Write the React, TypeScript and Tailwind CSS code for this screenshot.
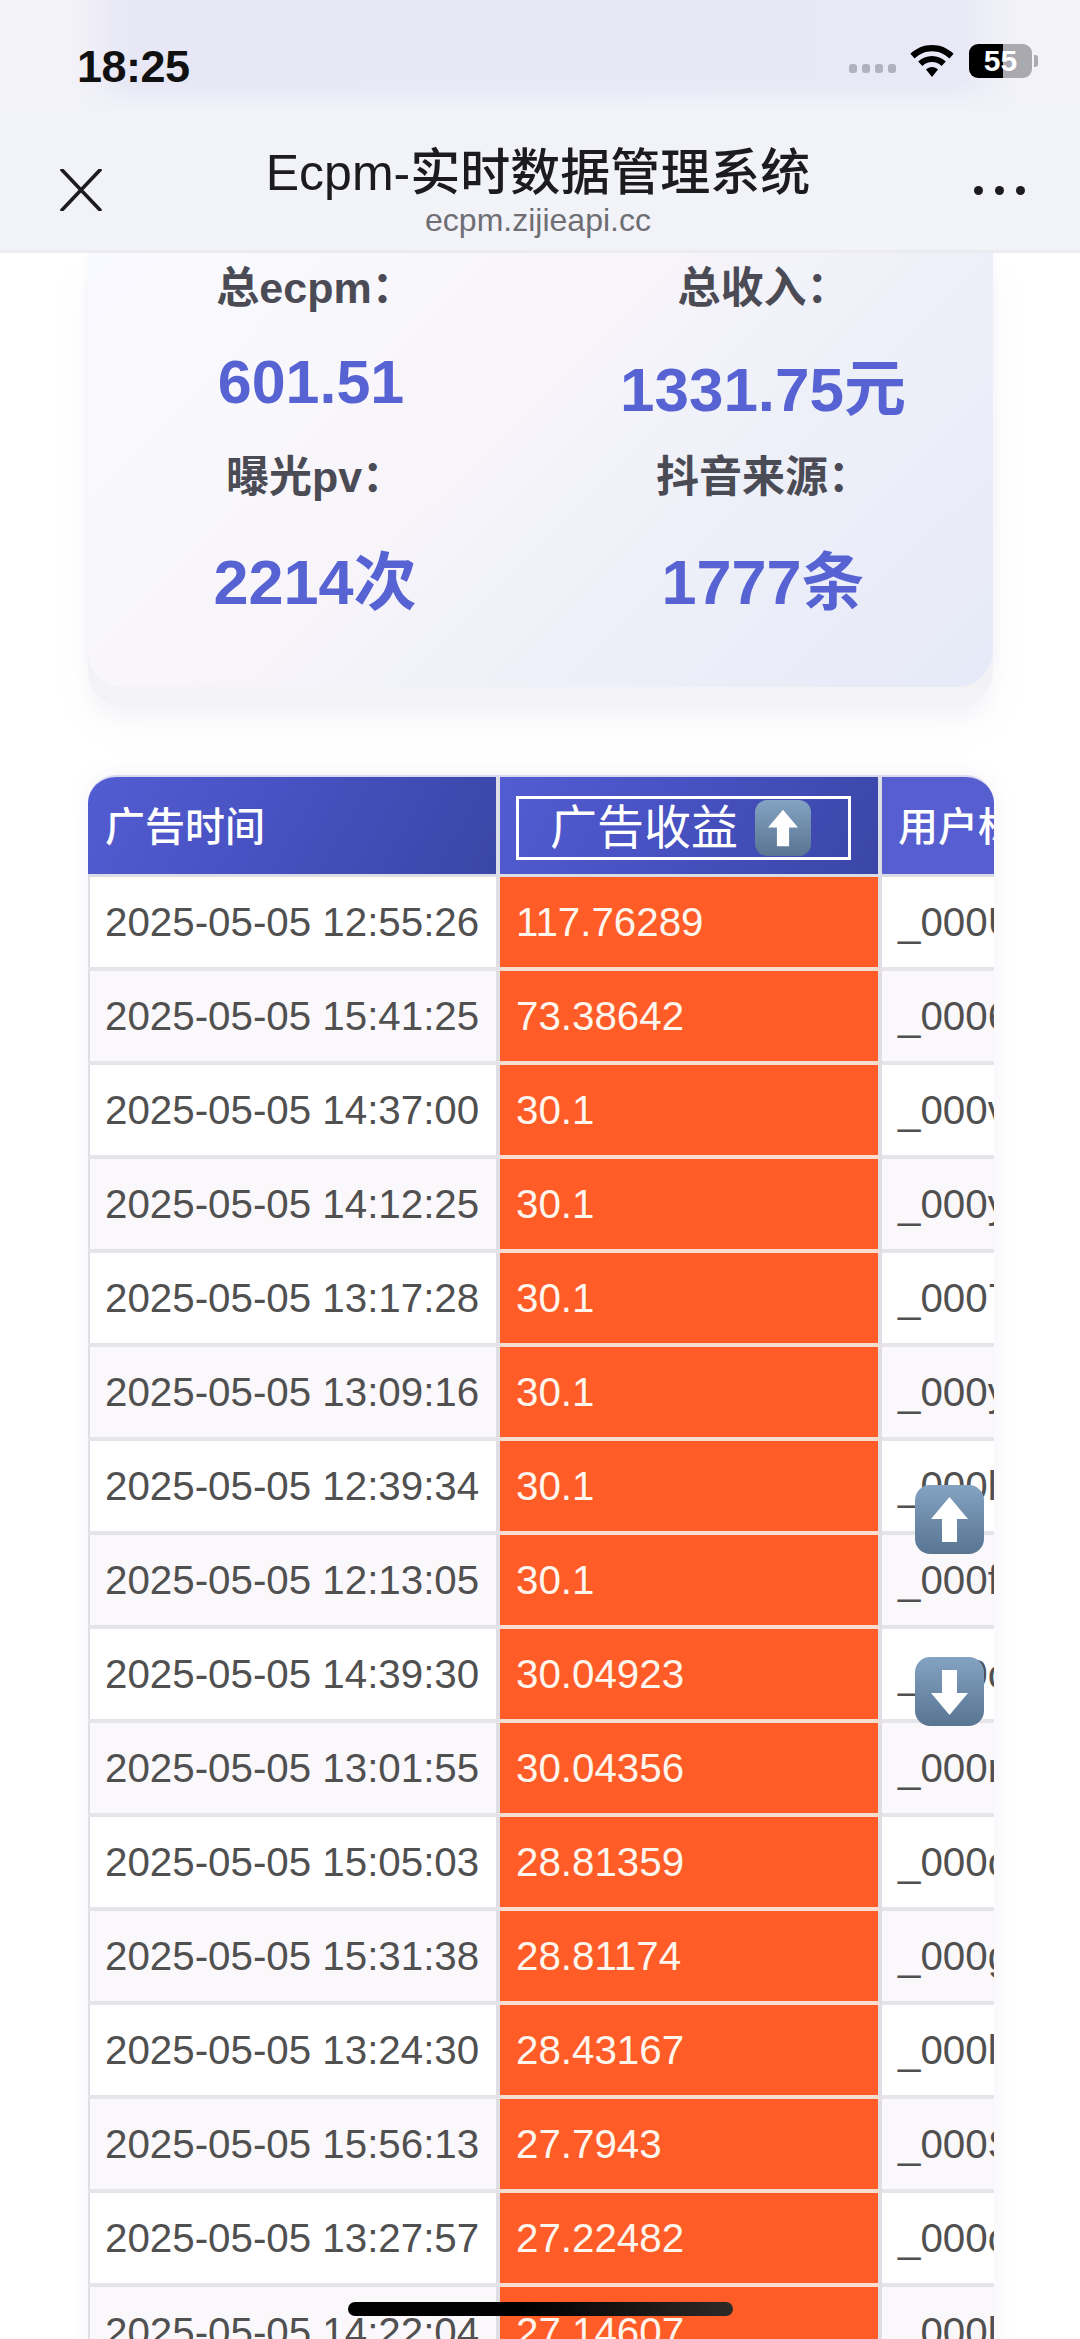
import React from 'react';

const rows = [
  ['2025-05-05 12:55:26', '117.76289', '_000U'],
  ['2025-05-05 15:41:25', '73.38642', '_0006'],
  ['2025-05-05 14:37:00', '30.1', '_000v'],
  ['2025-05-05 14:12:25', '30.1', '_000y'],
  ['2025-05-05 13:17:28', '30.1', '_0007'],
  ['2025-05-05 13:09:16', '30.1', '_000y'],
  ['2025-05-05 12:39:34', '30.1', '_000l'],
  ['2025-05-05 12:13:05', '30.1', '_000f'],
  ['2025-05-05 14:39:30', '30.04923', '_000c'],
  ['2025-05-05 13:01:55', '30.04356', '_000r'],
  ['2025-05-05 15:05:03', '28.81359', '_000c'],
  ['2025-05-05 15:31:38', '28.81174', '_000g'],
  ['2025-05-05 13:24:30', '28.43167', '_000l'],
  ['2025-05-05 15:56:13', '27.7943', '_000S'],
  ['2025-05-05 13:27:57', '27.22482', '_000c'],
  ['2025-05-05 14:22:04', '27.14607', '_000l'],
];

const ArrowKey: React.FC<{ dir: 'up' | 'down'; className: string }> = ({ dir, className }) => (
  <span className={`block rounded-[22%] bg-gradient-to-b from-[#84a3c2] to-[#587592] ${className}`}>
    <svg viewBox="0 0 69 69" className="w-full h-full" fill="#fff">
      {dir === 'up' ? (
        <polygon points="34.5,12 53,34 42,34 42,57 27,57 27,34 16,34" />
      ) : (
        <polygon points="34.5,58 53,36 42,36 42,13 27,13 27,36 16,36" />
      )}
    </svg>
  </span>
);

const StatusBar = () => (
  <div className="h-[110px] pt-[44px] pl-[77px] pr-[42px] flex items-start justify-between bg-[linear-gradient(to_bottom,transparent_75%,#f2f3f9_100%),linear-gradient(to_right,#f3f2f8_7%,#e7e7f6_12%,#e8e8f6_88%,#f2f2f8_94%)]">
    <span className="text-[45px] leading-[46px] font-bold text-[#111] tracking-[-0.5px]">18:25</span>
    <div className="flex items-center">
      <div className="flex gap-[5px] mt-[14px]">
        <i className="w-[8px] h-[9px] rounded-[3px] bg-[#b2b2be]" />
        <i className="w-[8px] h-[9px] rounded-[3px] bg-[#b2b2be]" />
        <i className="w-[8px] h-[9px] rounded-[3px] bg-[#b2b2be]" />
        <i className="w-[8px] h-[9px] rounded-[3px] bg-[#b2b2be]" />
      </div>
      <svg viewBox="0 0 44 32" className="w-[44px] h-[32px] ml-[14px]" fill="#000">
        <path d="M22 0C13.5 0 6 3.4 0.4 8.8L4.6 13.4C9.2 9 15.3 6.2 22 6.2S34.8 9 39.4 13.4L43.6 8.8C38 3.4 30.5 0 22 0Z" />
        <path d="M22 11C16.6 11 11.8 13.1 8.2 16.5L12.4 21C14.9 18.6 18.3 17.1 22 17.1S29.1 18.6 31.6 21L35.8 16.5C32.2 13.1 27.4 11 22 11Z" />
        <path d="M22 22C19.7 22 17.6 22.9 16 24.4L22 32L28 24.4C26.4 22.9 24.3 22 22 22Z" />
      </svg>
      <div className="relative ml-[15px] w-[63px] h-[34px] rounded-[9px] overflow-hidden bg-[linear-gradient(to_right,#000_54%,#a9a9af_54%)] flex items-center justify-center text-white text-[30px] font-bold leading-none">
        55
      </div>
      <i className="ml-[2px] w-[4px] h-[12px] rounded-r-[3px] bg-[#a9a9af]" />
    </div>
  </div>
);

const NavBar = () => (
  <div className="h-[143px] flex items-start justify-between bg-[#f2f3f9] border-b-[3px] border-[#ececf0] relative">
    <svg viewBox="0 0 42 42" className="w-[42px] h-[42px] ml-[60px] mt-[59px]" fill="none" stroke="#1c1c1e" strokeWidth="3.6" strokeLinecap="round">
      <path d="M2 1L40 41M40 1L2 41" />
    </svg>
    <div className="flex flex-col items-center pt-[33px]">
      <div className="text-[50px] leading-[60px] font-medium text-[#1c1c1e] whitespace-nowrap">Ecpm-实时数据管理系统</div>
      <div className="text-[32px] leading-[36px] text-[#6e6e73] -mt-[1px]">ecpm.zijieapi.cc</div>
    </div>
    <div className="flex gap-[12px] mr-[55px] mt-[76px]">
      <i className="w-[9px] h-[9px] rounded-full bg-[#1c1c1e]" />
      <i className="w-[9px] h-[9px] rounded-full bg-[#1c1c1e]" />
      <i className="w-[9px] h-[9px] rounded-full bg-[#1c1c1e]" />
    </div>
  </div>
);

const Stat: React.FC<{ label: string; value: string; labelClass?: string; valueClass: string }> = ({ label, value, labelClass, valueClass }) => (
  <div className="flex flex-col items-center h-[192px]">
    <div className={`pl-[25px] text-[43px] leading-[60px] font-semibold text-[#4b4b55] whitespace-nowrap ${labelClass ?? ''}`}>{label}</div>
    <div className={`leading-[70px] font-bold text-[#5763d3] whitespace-nowrap ${valueClass}`}>{value}</div>
  </div>
);

const StatsCard = () => (
  <div className="ml-[88px] w-[905px] h-[434px] pt-[5px] rounded-b-[36px] bg-[linear-gradient(135deg,#f9faff_0%,#f8f5fa_42%,#eff1f9_62%,#e6e9f7_100%)] shadow-[0_20px_0_#f3f3f6,0_34px_22px_rgba(236,236,244,0.5),0_0_12px_#f6f5fa]">
    <div className="-ml-[9px] w-[896px] grid grid-cols-2">
      <Stat label="总ecpm：" value="601.51" valueClass="text-[61px] mt-[29px] pl-[16px]" />
      <Stat label="总收入：" value="1331.75元" valueClass="text-[62px] mt-[37px] pl-[24px]" />
      <Stat label="曝光pv：" value="2214次" labelClass="-mt-[3px]" valueClass="text-[63px] mt-[40px] pl-[24px]" />
      <Stat label="抖音来源：" value="1777条" labelClass="-mt-[3px]" valueClass="text-[63px] mt-[40px] pl-[24px]" />
    </div>
  </div>
);

const DataTable = () => (
  <div className="mt-[88px] ml-[88px] w-[906px] rounded-t-[28px] overflow-hidden border-t-2 border-[#d8d8f0] shadow-[0_0_20px_rgba(130,130,200,0.1)]">
    <div className="flex h-[100px] border-b-[3px] border-[#dcdce4] text-white">
      <div className="w-[412px] border-r-4 border-[#dedee6] flex items-center pl-[17px] pt-[2px] text-[40px] font-medium bg-[linear-gradient(120deg,#535dd2_0%,#4650bf_50%,#3a46a6_100%)]">
        广告时间
      </div>
      <div className="w-[382px] border-r-4 border-[#dedee6] pt-[19px] pl-[16px] bg-[linear-gradient(120deg,#535dd2_0%,#4650bf_50%,#3a46a6_100%)]">
        <div className="w-[335px] h-[64px] border-[3px] border-white flex items-center pl-[31px] text-[47px] font-normal">
          <span>广告收益</span>
          <ArrowKey dir="up" className="w-[56px] h-[56px] ml-[17px] shrink-0" />
        </div>
      </div>
      <div className="flex-1 flex items-center pl-[16px] pt-[2px] text-[40px] font-medium whitespace-nowrap overflow-hidden bg-[#565ed0]">
        用户标识
      </div>
    </div>
    {rows.map((row, i) => (
      <div key={i} className={`flex h-[94px] border-b-4 border-[#e5e5e9] text-[40.3px] ${i % 2 === 0 ? 'bg-white' : 'bg-[#fbf8fc]'}`}>
        <div className="w-[412px] border-l-2 border-r-4 border-[#dedee4] flex items-center pl-[15px] pt-[3px] text-[#505050] whitespace-nowrap">
          {row[0]}
        </div>
        <div className="w-[382px] -mb-[4px] border-b-4 border-b-[#fbdcd0] border-r-4 border-r-[#dedee4] flex items-center pl-[16px] bg-[#ff5c28] text-[#fff6ee]">
          <span className="pt-[3px]">{row[1]}</span>
        </div>
        <div className="flex-1 flex items-center pl-[16px] pt-[3px] text-[#505050] whitespace-nowrap overflow-hidden">
          {row[2]}
        </div>
      </div>
    ))}
  </div>
);

export default function App() {
  return (
    <div className="relative w-[1080px] h-[2339px] overflow-hidden bg-white font-['Liberation_Sans','Noto_Sans_CJK_SC',sans-serif]">
      <StatusBar />
      <NavBar />
      <StatsCard />
      <DataTable />
      <ArrowKey dir="up" className="absolute left-[915px] top-[1485px] w-[69px] h-[69px]" />
      <ArrowKey dir="down" className="absolute left-[915px] top-[1657px] w-[69px] h-[69px]" />
      <div className="absolute left-[348px] top-[2302px] w-[385px] h-[14px] rounded-full bg-[linear-gradient(to_right,#000_45%,#2e2a28_100%)]" />
    </div>
  );
}
